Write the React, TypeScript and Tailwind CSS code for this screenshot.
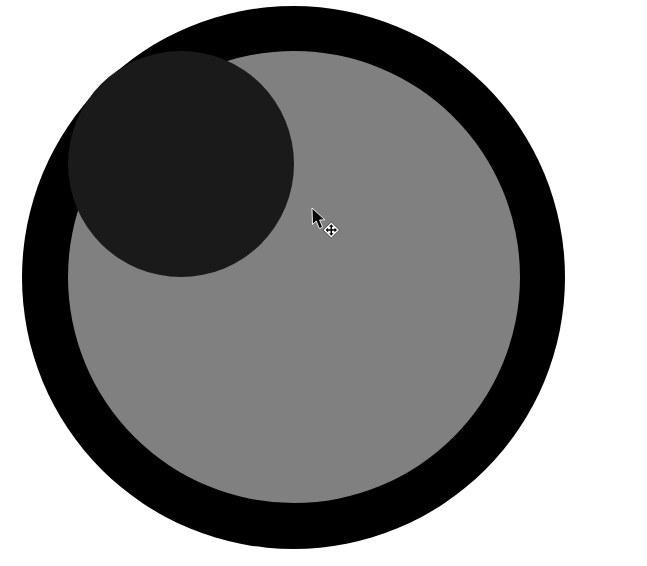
const Cursor = () => (
  <svg width="32" height="34" viewBox="0 0 32 34" className="absolute left-[243px] top-[156px]">
    <path d="M1 1 L1.5 17.5 L5.2 14 L8.4 21.5 L11.6 20.2 L8.6 13 L13.8 12.8 Z" fill="#000" stroke="#fff" strokeWidth="0.9" strokeLinejoin="round" />
    <path d="M20.3 15 L28.5 23 L20.3 31 L12 23 Z" fill="#fff" stroke="#333" strokeWidth="0.8" strokeLinejoin="round" />
    <path d="M20.3 19 V27 M16.3 23 H24.3" stroke="#000" strokeWidth="1.5" />
    <path d="M20.3 17.2 L22.6 19.8 H18 Z M20.3 28.8 L22.6 26.2 H18 Z M14.5 23 L17.1 20.7 V25.3 Z M26.1 23 L23.5 20.7 V25.3 Z" fill="#000" />
  </svg>
);

export default function App() {
  return (
    <div className="min-h-screen bg-white pl-[22px] pt-[6px]">
      <div className="w-[543px] h-[543px] rounded-full bg-black pl-[46px] pt-[45px]">
        <div className="relative w-[452px] h-[452px] rounded-full bg-[#808080]">
          <div className="w-[226px] h-[226px] rounded-full bg-[#1a1a1a]" />
          <Cursor />
        </div>
      </div>
    </div>
  );
}
